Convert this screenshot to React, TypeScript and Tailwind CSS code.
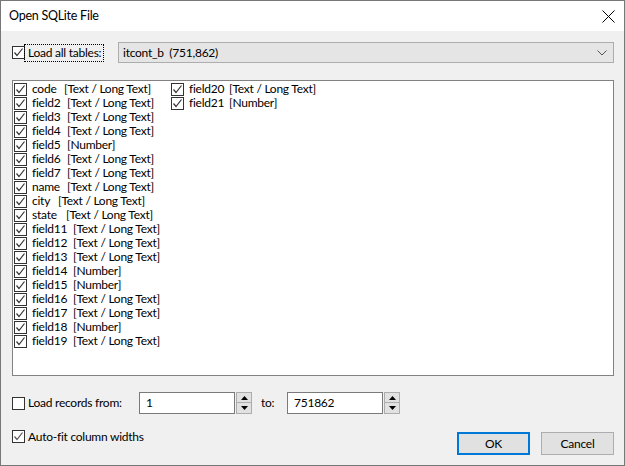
import React from "react";

const Check = ({ checked = true, light = false }: { checked?: boolean; light?: boolean }) => (
  <span className="w-[13px] h-[13px] shrink-0 border border-[#333333] bg-white flex items-center justify-center">
    {checked && (
      <svg width="11" height="11" viewBox="0 0 11 11">
        <path d="M1.5 5.5 L4 8.5 L9.5 1.5" fill="none" stroke={light ? "#555" : "#333"} strokeWidth="1.2" />
      </svg>
    )}
  </span>
);

type Item = { n: string; t: string; w: string };

const col1: Item[] = [
  { n: "code", t: "[Text / Long Text]", w: "w-[32px]" },
  { n: "field2", t: "[Text / Long Text]", w: "w-[35px]" },
  { n: "field3", t: "[Text / Long Text]", w: "w-[35px]" },
  { n: "field4", t: "[Text / Long Text]", w: "w-[35px]" },
  { n: "field5", t: "[Number]", w: "w-[35px]" },
  { n: "field6", t: "[Text / Long Text]", w: "w-[35px]" },
  { n: "field7", t: "[Text / Long Text]", w: "w-[35px]" },
  { n: "name", t: "[Text / Long Text]", w: "w-[35px]" },
  { n: "city", t: "[Text / Long Text]", w: "w-[26px]" },
  { n: "state", t: "[Text / Long Text]", w: "w-[34px]" },
  { n: "field11", t: "[Text / Long Text]", w: "w-[41px]" },
  { n: "field12", t: "[Text / Long Text]", w: "w-[41px]" },
  { n: "field13", t: "[Text / Long Text]", w: "w-[41px]" },
  { n: "field14", t: "[Number]", w: "w-[41px]" },
  { n: "field15", t: "[Number]", w: "w-[41px]" },
  { n: "field16", t: "[Text / Long Text]", w: "w-[41px]" },
  { n: "field17", t: "[Text / Long Text]", w: "w-[41px]" },
  { n: "field18", t: "[Number]", w: "w-[41px]" },
  { n: "field19", t: "[Text / Long Text]", w: "w-[41px]" },
];
const col2: Item[] = [
  { n: "field20", t: "[Text / Long Text]", w: "w-[40px]" },
  { n: "field21", t: "[Number]", w: "w-[40px]" },
];

const Row = ({ it }: { it: Item }) => (
  <div className="h-[14px] flex items-center whitespace-nowrap">
    <Check />
    <span className={`${it.w} ml-[5px] shrink-0`}>{it.n}</span>
    <span>{it.t}</span>
  </div>
);

const Spin = ({ value }: { value: string }) => (
  <div className="flex h-[22px] w-[113px]">
    <div className="flex-1 border border-[#7a7a7a] bg-white flex items-center pl-[6px]">{value}</div>
    <div className="ml-[1px] w-[16px] flex flex-col">
      <div className="h-[11px] border border-[#adadad] bg-[#e1e1e1] flex items-center justify-center">
        <svg width="7" height="4" viewBox="0 0 7 4"><path d="M0 4 L3.5 0 L7 4 Z" fill="#000" /></svg>
      </div>
      <div className="h-[11px] border border-t-0 border-[#adadad] bg-[#e1e1e1] flex items-center justify-center">
        <svg width="7" height="4" viewBox="0 0 7 4"><path d="M0 0 L3.5 4 L7 0 Z" fill="#000" /></svg>
      </div>
    </div>
  </div>
);

export default function App() {
  return (
    <div
      className="w-[625px] h-[466px] border border-[#777777] bg-[#f0f0f0] flex flex-col text-[12px] tracking-[-0.25px] text-black leading-none overflow-hidden"
      style={{ fontFamily: 'Lato, "Noto Sans", sans-serif' }}
    >
      <div className="h-[30px] bg-white flex items-center pl-[8px] shrink-0 relative">
        <span className="text-[12.5px]">Open SQLite File</span>
        <svg className="absolute right-[9px] top-[9px]" width="13" height="13" viewBox="0 0 13 13">
          <path d="M0.5 0.5 L12.5 12.5 M12.5 0.5 L0.5 12.5" stroke="#000" strokeWidth="1" />
        </svg>
      </div>
      <div className="flex-1 pl-[11px] pr-[10px] flex flex-col">
        <div className="mt-[11px] h-[21px] flex items-center">
          <div className="w-[106px] flex items-center">
            <Check />
            <span className="border border-dotted border-black pl-[3px] pr-[2px] -ml-[1px] py-[2px] leading-none">Load all tables:</span>
          </div>
          <div className="flex-1 h-[21px] border border-[#adadad] bg-[#e5e5e5] flex items-center pl-[4px] pr-[6px] justify-between">
            <span className="whitespace-pre">itcont_b  (751,862)</span>
            <svg width="10" height="6" viewBox="0 0 10 6">
              <path d="M0.5 0.5 L5 5 L9.5 0.5" fill="none" stroke="#555" strokeWidth="1" />
            </svg>
          </div>
        </div>
        <div className="mt-[17px] h-[296px] border border-[#828282] bg-white flex pl-[1px] pt-[1px]">
          <div className="w-[157px] flex flex-col">
            {col1.map((it) => (
              <Row key={it.n} it={it} />
            ))}
          </div>
          <div className="flex flex-col">
            {col2.map((it) => (
              <Row key={it.n} it={it} />
            ))}
          </div>
        </div>
        <div className="mt-[16px] flex items-center">
          <div className="w-[127px] flex items-center">
            <Check checked={false} />
            <span className="ml-[3px]">Load records from:</span>
          </div>
          <Spin value="1" />
          <span className="ml-[9px] w-[26px]">to:</span>
          <Spin value="751862" />
        </div>
        <div className="mt-[15px] flex items-start">
          <div className="flex items-center mt-[1px]">
            <Check light />
            <span className="ml-[3px]">Auto-fit column widths</span>
          </div>
          <div className="ml-auto flex mt-[3px]">
            <div className="w-[73px] h-[23px] border-2 border-[#0078d7] bg-[#e1e1e1] flex items-center justify-center">OK</div>
            <div className="ml-[11px] w-[73px] h-[23px] border border-[#adadad] bg-[#e1e1e1] flex items-center justify-center">Cancel</div>
          </div>
        </div>
      </div>
    </div>
  );
}
